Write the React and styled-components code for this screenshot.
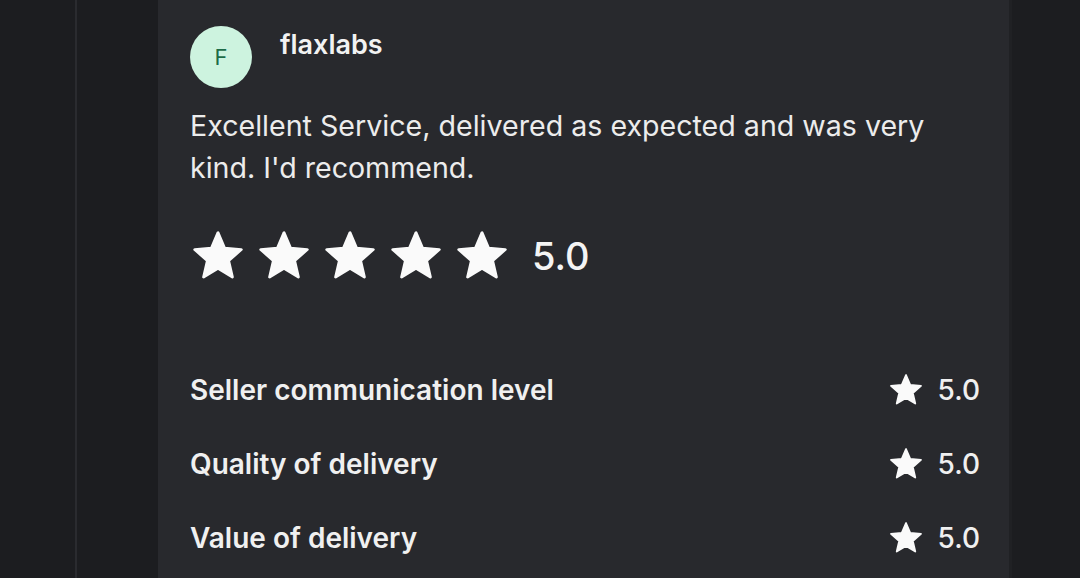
import React from 'react';
import styled, { createGlobalStyle } from 'styled-components';

const GlobalStyle = createGlobalStyle`
  html, body {
    margin: 0;
    padding: 0;
    background: #1c1d20;
    font-family: Inter, Roboto, "Noto Sans", "Liberation Sans", sans-serif;
    overflow: hidden;
  }
`;

const Page = styled.div`
  height: 578px;
  display: flex;
`;

const Gutter = styled.div`
  width: 75px;
`;

const Divider = styled.div`
  width: 2px;
  background: #2a2b2f;
`;

const Spacer = styled.div`
  width: 81px;
`;

const Card = styled.div`
  width: 854px;
  background: #28292d;
  padding: 26px 29px 0 32px;
  box-sizing: border-box;
  border-right: 3px solid #202124;
`;

const Header = styled.div`
  display: flex;
  align-items: flex-start;
  gap: 28px;
`;

const Avatar = styled.div`
  width: 62px;
  height: 62px;
  border-radius: 50%;
  background: #cdf3df;
  color: #1d6b47;
  font-size: 22px;
  display: flex;
  align-items: center;
  justify-content: center;
`;

const Name = styled.div`
  color: #f2f2f2;
  font-size: 27px;
  font-weight: 600;
  line-height: 36px;
  margin-top: 1px;
`;

const Review = styled.p`
  margin: 17px 0 0 0;
  color: #ececec;
  font-size: 28.6px;
  line-height: 42px;
  max-width: 780px;
`;

const StarRow = styled.div`
  display: flex;
  align-items: center;
  margin-top: 37px;
  height: 60px;
`;

const Score = styled.span`
  color: #f4f4f4;
  font-size: 38px;
  font-weight: 500;
  margin-left: 22px;
`;

const Criteria = styled.div`
  margin-top: 67px;
  display: flex;
  flex-direction: column;
`;

const Row = styled.div`
  height: 74px;
  display: flex;
  align-items: center;
  justify-content: space-between;
`;

const Label = styled.span`
  color: #f0f0f0;
  font-size: 28px;
  font-weight: 600;
`;

const Value = styled.span`
  display: flex;
  align-items: center;
  gap: 14px;
  color: #f0f0f0;
  font-size: 28px;
  font-weight: 500;
`;

const Star = ({ size, gap = 0 }) => (
  <svg
    width={size}
    height={size}
    viewBox="0 0 24 24"
    style={{ marginRight: gap, display: 'block' }}
  >
    <path
      d="M12 17.27L18.18 21l-1.64-7.03L22 9.24l-7.19-.61L12 2 9.19 8.63 2 9.24l5.46 4.73L5.82 21z"
      fill="#fafafa"
      stroke="#fafafa"
      strokeWidth="1.2"
      strokeLinejoin="round"
    />
  </svg>
);

const criteria = [
  'Seller communication level',
  'Quality of delivery',
  'Value of delivery',
];

export default function App() {
  return (
    <>
      <GlobalStyle />
      <Page>
        <Gutter />
        <Divider />
        <Spacer />
        <Card>
          <Header>
            <Avatar>F</Avatar>
            <Name>flaxlabs</Name>
          </Header>
          <Review>
            Excellent Service, delivered as expected and was very kind. I'd
            recommend.
          </Review>
          <StarRow>
            {[0, 1, 2, 3, 4].map((i) => (
              <Star key={i} size={56} gap={i < 4 ? 10 : 0} />
            ))}
            <Score>5.0</Score>
          </StarRow>
          <Criteria>
            {criteria.map((c) => (
              <Row key={c}>
                <Label>{c}</Label>
                <Value>
                  <Star size={36} />
                  5.0
                </Value>
              </Row>
            ))}
          </Criteria>
        </Card>
      </Page>
    </>
  );
}
